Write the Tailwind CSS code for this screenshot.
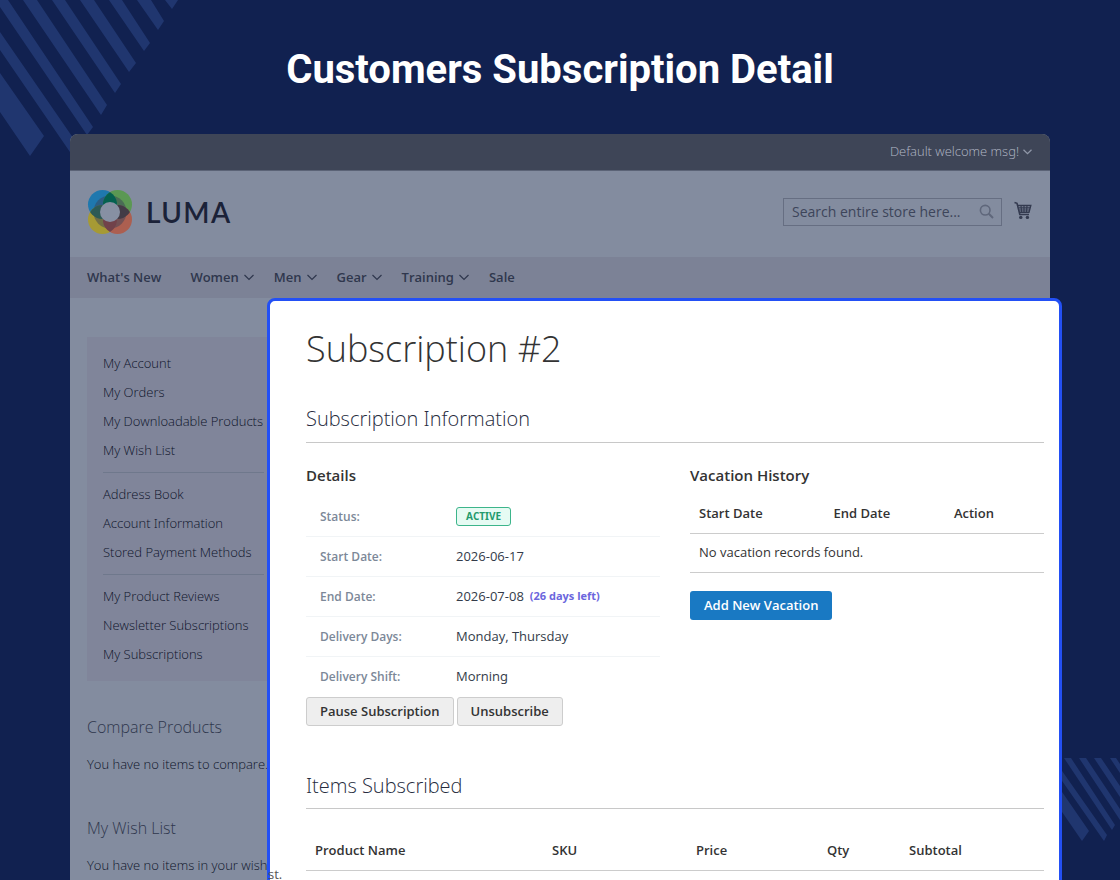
<!DOCTYPE html>
<html lang="en">
<head>
<meta charset="utf-8">
<meta name="viewport" content="width=device-width, initial-scale=1">
<title>Customers Subscription Detail</title>
<script src="https://cdn.jsdelivr.net/npm/@tailwindcss/browser@4"></script>
</head>
<body class="bg-[#112150]">
<div class="relative flex h-screen min-h-[600px] flex-col overflow-hidden bg-[#112150] font-['Open_Sans',sans-serif] text-[13px] [font-feature-settings:'ss01']">

  <!-- Background stripes -->
  <svg class="absolute top-0 left-0" width="180" height="160" viewBox="0 0 180 160" fill="#20366f" aria-hidden="true">
    <path d="M0 73L44 136 30 156 0 112zM0 32L78 145 72 155 0 50zM0 0H8L93 127 87 135 0 7zM23 0H37L107 105 101 115zM52 0H65L121 84 115 93zM80 0H94L136 63 129 72zM109 0H122L150 43 144 51zM137 0H151L164 21 158 30zM165 0H178L172 9z"/>
  </svg>
  <svg class="absolute top-[758px] right-0" width="60" height="84" viewBox="0 0 60 84" fill="#20366f" aria-hidden="true">
    <path d="M0 31L29 73 22 83 0 51zM0 10L47 77 44 83 0 20zM4 0H11L55 67 52 72zM19 0H26L60 51V62zM34 0H41L60 28V39zM50 0H56L60 6V15z"/>
  </svg>

  <h1 class="relative pt-[45px] text-center font-[Roboto,sans-serif] text-[40px] leading-[50px] font-bold text-white">Customers Subscription Detail</h1>

  <!-- Storefront -->
  <div class="relative mx-[70px] mt-[39px] flex-1 overflow-hidden rounded-t-lg bg-[#838c9f] text-[#2f374d]">
    <div class="flex h-9 items-center justify-end bg-[#3e4557] pr-[18px] text-[#b2b8c6]">
      <button type="button" class="flex items-center gap-1 font-light">Default welcome msg!
        <svg width="9" height="6" viewBox="0 0 9 6" fill="none" stroke="#9097a8" stroke-width="1.3" aria-hidden="true"><path d="M.5.8L4.5 4.6 8.5.8"/></svg>
      </button>
    </div>
    <header class="flex h-[87px] items-center justify-between border-t border-[#5b6376] pr-[18px] pb-1 pl-[17px]">
      <a href="#" class="flex items-center gap-[13px]" aria-label="LUMA">
        <svg width="46" height="46" viewBox="0 0 46 46" aria-hidden="true">
          <defs>
            <clipPath id="blue"><circle cx="15.5" cy="15.5" r="14.5"/></clipPath>
            <clipPath id="green"><circle cx="30.5" cy="15.5" r="14.5"/></clipPath>
            <clipPath id="orange"><circle cx="30.5" cy="30.5" r="14.5"/></clipPath>
          </defs>
          <circle cx="15.5" cy="15.5" r="14.5" fill="#1f78ae"/>
          <circle cx="30.5" cy="15.5" r="14.5" fill="#5b9853"/>
          <circle cx="15.5" cy="30.5" r="14.5" fill="#a69a34"/>
          <circle cx="30.5" cy="30.5" r="14.5" fill="#ac5f50"/>
          <circle cx="23" cy="23" r="16.5" fill="#3a4258" opacity=".5"/>
          <circle cx="30.5" cy="15.5" r="14.5" fill="#056150" clip-path="url(#blue)"/>
          <circle cx="15.5" cy="30.5" r="14.5" fill="#2d5a55" clip-path="url(#blue)"/>
          <circle cx="30.5" cy="30.5" r="14.5" fill="#433b46" clip-path="url(#green)"/>
          <circle cx="15.5" cy="30.5" r="14.5" fill="#71424a" clip-path="url(#orange)"/>
          <circle cx="23" cy="23" r="10" fill="#8790a3"/>
        </svg>
        <span class="font-[Lato,sans-serif] text-[28px] leading-8 font-semibold tracking-wider text-[#1b2238]">LUMA</span>
      </a>
      <div class="flex items-center gap-3">
        <form class="relative">
          <label for="search" class="sr-only">Search</label>
          <input id="search" type="text" placeholder="Search entire store here..." class="block h-7 w-[219px] border border-[#666e82] pr-7 pb-[2px] pl-2 text-[14px] text-[#2f374d] placeholder:text-[#3d455a]">
          <button type="button" aria-label="Search" class="absolute top-[6px] right-2 text-[#5f677b]">
            <svg width="15" height="15" viewBox="0 0 15 15" fill="none" stroke="currentColor" stroke-width="1.6"><circle cx="6.2" cy="6.2" r="4.8"/><path d="M9.8 9.8L14 14" stroke-width="2"/></svg>
          </button>
        </form>
        <a href="#" aria-label="My Cart" class="pb-1 text-[#343b50]">
          <svg width="18" height="19" viewBox="0 0 18 19" fill="none" stroke="currentColor" aria-hidden="true">
            <path d="M.5 1.5L3 2.3 5.8 13.500H15" stroke-width="1.6"/>
            <path d="M3.6 4.500H16.8L15 11.300H5.3" stroke-width="1.4"/>
            <path d="M4.5 6.800H16M5 9H15.5M7 4.5L7.6 11M10 4.500V11M13 4.5L12.5 11" stroke-width="1.2"/>
            <circle cx="6.8" cy="16.4" r="1.7" fill="currentColor" stroke="none"/><circle cx="13.4" cy="16.4" r="1.7" fill="currentColor" stroke="none"/>
          </svg>
        </a>
      </div>
    </header>
    <nav class="flex h-[41px] items-center gap-5 bg-[#7c8296] pl-[17px] font-semibold">
      <a href="#" class="mr-[9px]">What's New</a>
      <a href="#" class="flex items-center gap-[5px]">Women <svg width="10" height="7" viewBox="0 0 10 7" fill="none" stroke="currentColor" stroke-width="1.2"><path d="M.5 1L5 5.500 9.500 1"/></svg></a>
      <a href="#" class="flex items-center gap-[5px]">Men <svg width="10" height="7" viewBox="0 0 10 7" fill="none" stroke="currentColor" stroke-width="1.2"><path d="M.5 1L5 5.500 9.500 1"/></svg></a>
      <a href="#" class="flex items-center gap-[5px]">Gear <svg width="10" height="7" viewBox="0 0 10 7" fill="none" stroke="currentColor" stroke-width="1.2"><path d="M.5 1L5 5.500 9.500 1"/></svg></a>
      <a href="#" class="flex items-center gap-[5px]">Training <svg width="10" height="7" viewBox="0 0 10 7" fill="none" stroke="currentColor" stroke-width="1.2"><path d="M.5 1L5 5.500 9.500 1"/></svg></a>
      <a href="#">Sale</a>
    </nav>
    <aside class="mt-[39px] ml-[17px] w-[193px] font-light whitespace-nowrap text-[#0e142a]">
      <nav class="flex flex-col bg-[#80859a] px-4 py-3 leading-[29px]">
        <a href="#">My Account</a>
        <a href="#">My Orders</a>
        <a href="#">My Downloadable Products</a>
        <a href="#">My Wish List</a>
        <hr class="my-[7px] border-[#6f788c]">
        <a href="#">Address Book</a>
        <a href="#">Account Information</a>
        <a href="#">Stored Payment Methods</a>
        <hr class="my-[7px] border-[#6f788c]">
        <a href="#">My Product Reviews</a>
        <a href="#">Newsletter Subscriptions</a>
        <a href="#">My Subscriptions</a>
      </nav>
      <h2 class="mt-[34px] text-[16px] leading-6 text-[#2f374d]">Compare Products</h2>
      <p class="mt-[15px] leading-5">You have no items to compare.</p>
      <h2 class="mt-[42px] text-[16px] leading-6 text-[#2f374d]">My Wish List</h2>
      <p class="mt-[15px] leading-5">You have no items in your wish</p>
    </aside>
  </div>

  <!-- Subscription panel lying over the storefront -->
  <main class="absolute top-[298px] right-[58px] bottom-[-12px] left-[267px] rounded-lg border-[3px] border-[#2350f5] bg-white pt-[26px] pr-[15px] pl-9 text-[#333]">
    <h2 class="text-[36px] leading-[44px] font-light">Subscription #2</h2>

    <h3 class="mt-[34px] border-b border-[#c8c8c8] pb-[9px] text-[20px] leading-7 font-light text-[#262b3d]">Subscription Information</h3>
    <div class="mt-5 grid grid-cols-2 gap-[30px]">
      <section>
        <h4 class="text-[15px] leading-6 font-semibold">Details</h4>
        <dl class="mt-[10px] text-[#333b49]">
          <div class="flex h-10 items-center border-b border-[#f1f4f6] pl-[14px]"><dt class="w-[136px] text-[12px] font-semibold text-[#7c8898]">Status:</dt><dd><span class="block rounded-[3px] border border-[#3db58b] bg-[#e6fbf3] px-[9px] text-[10px] leading-[17px] font-bold text-[#239a6c]">ACTIVE</span></dd></div>
          <div class="flex h-10 items-center border-b border-[#f1f4f6] pl-[14px]"><dt class="w-[136px] text-[12px] font-semibold text-[#7c8898]">Start Date:</dt><dd>2026-06-17</dd></div>
          <div class="flex h-10 items-center border-b border-[#f1f4f6] pl-[14px]"><dt class="w-[136px] text-[12px] font-semibold text-[#7c8898]">End Date:</dt><dd class="flex items-center gap-[6px]">2026-07-08 <span class="text-[11px] font-bold text-[#6b66dd]">(26 days left)</span></dd></div>
          <div class="flex h-10 items-center border-b border-[#f1f4f6] pl-[14px]"><dt class="w-[136px] text-[12px] font-semibold text-[#7c8898]">Delivery Days:</dt><dd>Monday, Thursday</dd></div>
          <div class="flex h-10 items-center pl-[14px]"><dt class="w-[136px] text-[12px] font-semibold text-[#7c8898]">Delivery Shift:</dt><dd>Morning</dd></div>
        </dl>
        <div class="flex gap-[3px] font-semibold">
          <button type="button" class="rounded-[3px] border border-[#cdcdcd] bg-[#eee] px-[13px] leading-[27px]">Pause Subscription</button>
          <button type="button" class="rounded-[3px] border border-[#cdcdcd] bg-[#eee] px-[13px] leading-[27px]">Unsubscribe</button>
        </div>
      </section>
      <section>
        <h4 class="text-[15px] leading-6 font-semibold">Vacation History</h4>
        <table class="mt-[7px] w-full table-fixed text-left">
          <thead><tr class="h-[39px] border-b border-[#ccc]"><th class="w-[38%] pl-[9px] font-semibold">Start Date</th><th class="w-[34%] pl-[9px] font-semibold">End Date</th><th class="pl-[9px] font-semibold">Action</th></tr></thead>
          <tbody><tr class="h-[39px] border-b border-[#ccc]"><td colspan="3" class="pl-[9px]">No vacation records found.</td></tr></tbody>
        </table>
        <button type="button" class="mt-[18px] rounded-[3px] bg-[#1979c3] px-[14px] leading-[29px] font-semibold text-white">Add New Vacation</button>
      </section>
    </div>

    <h3 class="mt-[46px] border-b border-[#c8c8c8] pb-2 text-[20px] leading-7 font-light text-[#262b3d]">Items Subscribed</h3>
    <table class="mt-[22px] w-full table-fixed text-left">
      <thead><tr class="h-[39px] border-b border-[#ccc]"><th class="w-[237px] pl-[9px] font-semibold">Product Name</th><th class="w-[144px] pl-[9px] font-semibold">SKU</th><th class="w-[131px] pl-[9px] font-semibold">Price</th><th class="w-[82px] pl-[9px] font-semibold">Qty</th><th class="pl-[9px] font-semibold">Subtotal</th></tr></thead>
    </table>
    <span class="absolute top-[563px] -left-[2px] leading-5 text-[#555]">st.</span>
  </main>
</div>
</body>
</html>
